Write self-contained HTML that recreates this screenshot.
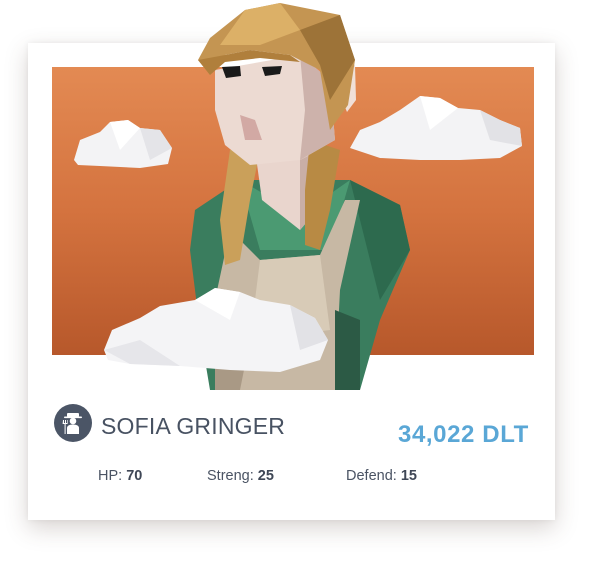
<!DOCTYPE html>
<html><head><meta charset="utf-8"><style>
html,body{margin:0;padding:0;background:#fff;width:597px;height:562px;overflow:hidden;position:relative;font-family:"Liberation Sans",sans-serif}
.card{position:absolute;left:28px;top:43px;width:527px;height:477px;background:#fff;box-shadow:0 8px 22px rgba(80,60,50,.22),0 0 6px rgba(0,0,0,.06)}
.panel{position:absolute;left:52px;top:67px;width:482px;height:288px;background:linear-gradient(180deg,#e38a53 0%,#d4733f 50%,#b7582b 100%)}
svg.art{position:absolute;left:0;top:0}
.avatar{position:absolute;left:54px;top:404px;width:38px;height:38px;border-radius:50%;background:#4b5566}
.name{position:absolute;left:101px;top:413px;font-size:23px;color:#485262;letter-spacing:.2px}
.dlt{position:absolute;left:398px;top:421px;font-size:24px;color:#5aa7d6;font-weight:bold;letter-spacing:.6px}
.st{position:absolute;top:468px;font-size:14.5px;color:#4a5363}
.st b{color:#3f4756}
</style></head><body>
<div class="card"></div>
<div class="panel"></div>
<svg class="art" width="597" height="562" viewBox="0 0 597 562">
<g fill="#f3f3f5">
<polygon points="74,160 80,140 100,132 110,122 128,120 140,128 160,130 172,148 168,164 140,168 100,166 78,165"/>
<polygon points="110,122 128,120 140,128 120,150" fill="#fff"/>
<polygon points="140,128 160,130 172,148 150,160" fill="#e4e4e8"/>
</g>
<g fill="#f3f3f5">
<polygon points="350,148 360,130 380,122 400,110 420,96 440,98 458,108 480,110 500,120 520,128 522,146 500,158 460,160 420,160 380,158"/>
<polygon points="420,96 440,98 458,108 430,130" fill="#fff"/>
<polygon points="480,110 500,120 520,128 522,146 490,140" fill="#e2e2e6"/>
</g>
<polygon points="195,210 240,180 350,180 400,205 410,250 380,320 360,390 210,390 200,330 190,250" fill="#3a7d5e"/>
<polygon points="240,180 300,215 350,180 330,250 260,250" fill="#4b9a72"/>
<polygon points="350,180 400,205 410,250 380,300" fill="#2d6a4e"/>
<polygon points="230,230 260,260 320,255 345,200 360,200 340,290 335,390 215,390 215,300" fill="#c7b8a4"/>
<polygon points="260,260 320,255 330,330 250,340" fill="#d8cbb7"/>
<polygon points="215,300 250,340 240,390 215,390" fill="#a99985"/>
<polygon points="335,310 360,320 360,390 335,390" fill="#2c5a45"/>
<polygon points="255,150 320,150 330,195 300,230 262,200" fill="#e9d5cd"/>
<polygon points="300,160 320,150 330,195 300,230" fill="#c9aea6"/>
<polygon points="230,150 260,150 250,200 240,260 225,265 220,220" fill="#caa05a"/>
<polygon points="310,140 340,150 330,210 320,250 305,245 305,190" fill="#b88a44"/>
<polygon points="215,70 300,55 330,80 335,140 300,160 250,165 225,145 215,110" fill="#ecdad2"/>
<polygon points="300,55 330,80 335,140 300,160 305,110" fill="#cdb2ab"/>
<polygon points="240,115 255,120 262,140 245,140" fill="#d2a9a4"/>
<polygon points="222,67 240,66 241,76 226,78" fill="#1a1a1a"/>
<polygon points="262,67 282,66 280,74 265,76" fill="#1a1a1a"/>
<polygon points="345,60 355,65 356,100 347,112 340,95" fill="#f0e0d8"/>
<polygon points="198,60 210,38 245,10 280,3 340,15 355,60 348,105 330,130 320,70 290,55 250,50 225,55 210,75" fill="#c49552"/>
<polygon points="245,10 280,3 300,30 260,45 220,45" fill="#dcb067"/>
<polygon points="300,30 340,15 355,60 330,100 320,65" fill="#9d7338"/>
<polygon points="198,60 225,55 250,50 290,55 300,62 260,58 225,62 210,75" fill="#b07f3c"/>
<g>
<polygon points="104,350 112,330 140,318 160,306 195,300 215,288 240,292 260,300 290,305 315,318 328,340 320,360 280,372 230,370 180,366 130,364 108,360" fill="#f4f4f6"/>
<polygon points="195,300 215,288 240,292 230,320" fill="#fff"/>
<polygon points="290,305 315,318 328,340 300,350" fill="#e2e2e6"/>
<polygon points="104,350 140,340 180,366 130,364" fill="#e6e6ea"/>
</g>
</svg>
<div class="avatar"><svg width="38" height="38" viewBox="0 0 38 38"><g fill="#fff"><rect x="13" y="9" width="12" height="4" rx="1"/><rect x="10" y="12.5" width="18" height="1.6" rx=".8"/><circle cx="19" cy="17" r="3.3"/><path d="M13 30v-6c0-2 2-3.5 6-3.5s6 1.5 6 3.5v6z"/><path d="M9 16h1v3h1v-3h1v3h1v-3h.6v4h-2v10h-1V20h-2z"/></g></svg></div>
<div class="name">SOFIA GRINGER</div>
<div class="dlt">34,022 DLT</div>
<div class="st" style="left:98px">HP: <b>70</b></div>
<div class="st" style="left:207px">Streng: <b>25</b></div>
<div class="st" style="left:346px">Defend: <b>15</b></div>
</body></html>
